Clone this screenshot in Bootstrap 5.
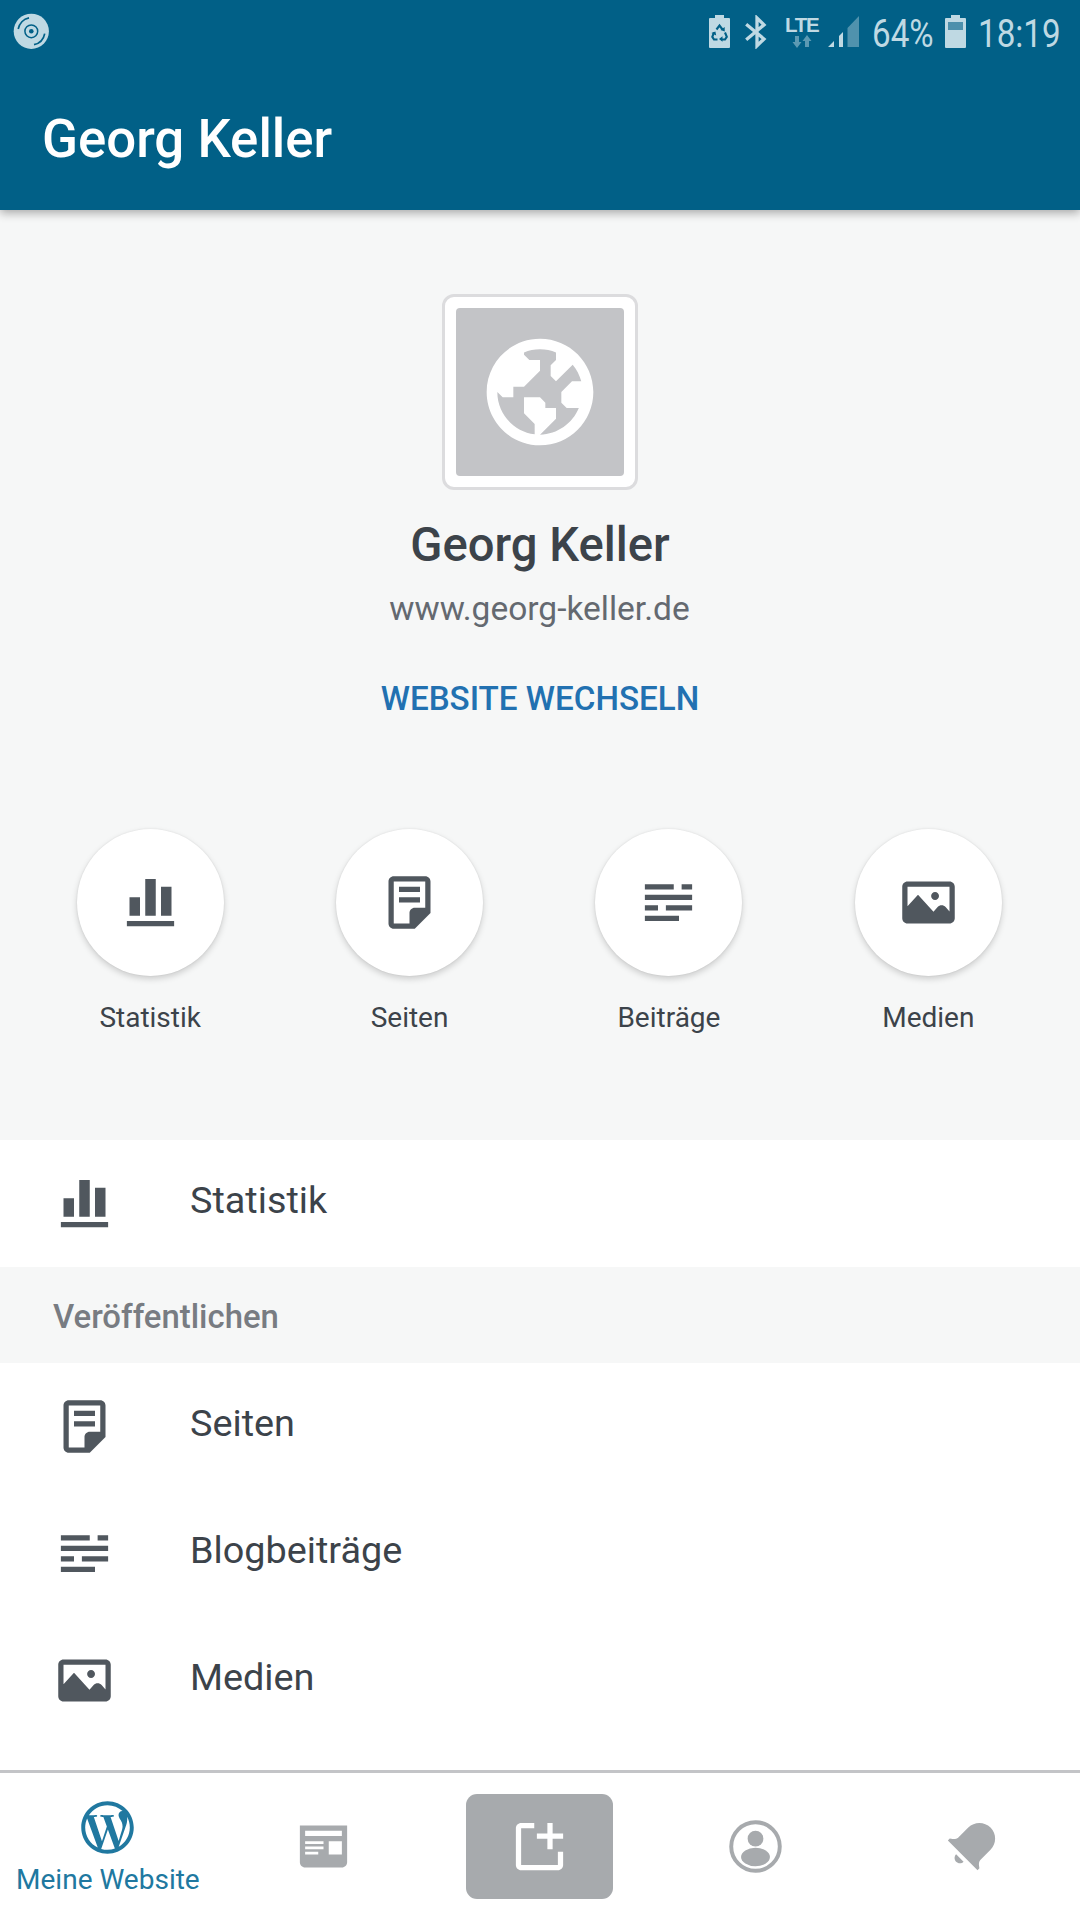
<!DOCTYPE html>
<html lang="de">
<head>
<meta charset="utf-8">
<meta name="viewport" content="width=device-width, initial-scale=1">
<title>Georg Keller</title>
<link href="https://cdn.jsdelivr.net/npm/bootstrap@5.3.0/dist/css/bootstrap.min.css" rel="stylesheet">
<style>
  body { font-family: Roboto, "Noto Sans", sans-serif; color: #3c434a; background: #fff; width: 1080px; height: 1920px; overflow: hidden; }
  svg { display: block; flex: none; fill: currentColor; }
  .ico { width: 63px; height: 63px; color: #50575e; }
  .app-head { height: 210px; background: #016087; box-shadow: 0 3px 9px rgba(0,0,0,.32); z-index: 2; }
  .status { height: 63px; color: #bfd9e3; }
  .disc-ico { margin: 13px 0 0 13px; }
  .status-right { padding-right: 16px; }
  .status-right > svg { margin-top: 15px; }
  .status-txt { font-size: 39.5px; line-height: 46px; margin-top: 11px; white-space: nowrap; transform: scaleX(.84); transform-origin: 0 50%; }
  .bt { margin-left: 14px; }
  .net { margin: 16px 0 0 17px; width: 34px; }
  .net svg { margin: 1px 0 0 7px; }
  .signal { margin-left: 9px; }
  .batt { margin-left: 12px; }
  .pct { width: 61px; margin-left: 12px; }
  .clock { width: 86px; margin-left: 12px; }
  .lte { font-family: "Liberation Sans", sans-serif; font-size: 20.5px; letter-spacing: -1.3px; font-weight: 700; line-height: 18px; }
  .app-title { font-size: 52.8px; line-height: 62px; font-weight: 500; padding: 45px 0 0 42px; }
  .hero { height: 930px; background: #f6f7f7; padding-top: 84px; }
  .site-frame { width: 196px; height: 196px; border: 3px solid #dcdcde; border-radius: 12px; background: #fff; padding: 11px; }
  .site-img { background: #c3c4c7; border-radius: 4px; color: #fff; height: 168px; }
  .site-name { font-size: 47.2px; line-height: 56px; font-weight: 500; margin-top: 27px; }
  .site-url { font-size: 33.5px; line-height: 40px; color: #646970; margin-top: 16px; padding-right: 1px; }
  .site-switch { font-size: 33.2px; line-height: 40px; font-weight: 500; color: #2271b1; margin-top: 50px; text-decoration: none; }
  .quick { padding: 0 22px 0 20.5px; margin-top: 110px; }
  .disc { width: 147px; height: 147px; background: #fff; box-shadow: 0 3px 6px rgba(0,0,0,.17), 0 0 2px rgba(0,0,0,.09); }
  .quick-label { font-size: 28px; line-height: 34px; margin-top: 25px; }
  .menu-row { height: 127px; padding-left: 53px; border: 0; border-radius: 0; }
  .menu-row span { font-size: 37.8px; line-height: 46px; margin-left: 74px; padding-bottom: 7px; color: #3c434a; }
  .menu-sec { height: 96px; background: #f6f7f7; color: #787c82; font-size: 32.9px; font-weight: 500; padding: 4px 0 0 53px; }
  .tabs { height: 150px; border-top: 3px solid #c3c4c7; color: #a7aaad; background: #fff; padding-right: 1px; }
  .tabs .ico { color: inherit; }
  .tab-on { color: #2078a0 !important; }
  .tab-on span { font-size: 28px; line-height: 34px; margin-top: 4px; white-space: nowrap; }
  .compose { width: 147px; height: 105px; border-radius: 11px; background: #a7aaad; color: #fff; }
</style>
<script src="https://cdn.jsdelivr.net/npm/bootstrap@5.3.0/dist/js/bootstrap.bundle.min.js"></script>
</head>
<body class="d-flex flex-column">
<svg class="d-none" aria-hidden="true">
  <symbol id="i-stats" viewBox="0 0 24 24"><path d="M21 21H3v-2h18v2zM8 10H4v7h4v-7zm6-7h-4v14h4V3zm6 3h-4v11h4V6z"/></symbol>
  <symbol id="i-pages" viewBox="0 0 24 24"><path d="M16 8H8V6h8v2zm0 2H8v2h8v-2zm4-6v12l-6 6H6c-1.105 0-2-.895-2-2V4c0-1.105.895-2 2-2h12c1.105 0 2 .895 2 2zm-2 10V4H6v16h6v-4c0-1.105.895-2 2-2h4z"/></symbol>
  <symbol id="i-posts" viewBox="0 0 24 24"><path d="M16 19H3v-2h13v2zm5-10H3v2h18V9zM3 5v2h11V5H3zm14 0v2h4V5h-4zm-6 8v2h10v-2H11zm-8 0v2h5v-2H3z"/></symbol>
  <symbol id="i-image" viewBox="0 0 24 24"><path d="M13 9.5c0-.828.672-1.5 1.5-1.5s1.5.672 1.5 1.5-.672 1.5-1.5 1.5-1.5-.672-1.5-1.5zM22 6v12c0 1.105-.895 2-2 2H4c-1.105 0-2-.895-2-2V6c0-1.105.895-2 2-2h16c1.105 0 2 .895 2 2zm-2 0H4v7.444L8 9l5.895 6.55 1.587-1.85c.798-.932 2.24-.932 3.037 0L20 15.426V6z"/></symbol>
</svg>

<header class="app-head position-relative flex-shrink-0">
  <div class="status d-flex align-items-start justify-content-between">
    <svg class="disc-ico" width="36" height="36" viewBox="0 0 36 36">
      <circle cx="18.3" cy="18.3" r="17.6"/>
      <g fill="none" stroke="#016087" stroke-width="1.5"><circle cx="18.3" cy="18.3" r="6.4"/><path d="M5.2 16A14 14 0 0 1 16 4.8M31.7 20.6A14 14 0 0 1 21 31.7" stroke-width="1.7"/></g>
      <circle cx="18.3" cy="18.3" r="2.3" fill="#016087"/>
    </svg>
    <div class="status-right d-flex align-items-start">
      <svg width="21" height="33" viewBox="0 0 21 33">
        <path d="M6 0h9v3h5q1 0 1 1v28q0 1-1 1H1q-1 0-1-1V4q0-1 1-1h5z"/>
        <path d="M7.500 14.500L10.500 10.500l3 4M16 17.500l1.800 4.300L16 24.500h-3.500M8.500 24.500H5l-1.700-2.700L5 17.500" fill="none" stroke="#016087" stroke-width="2.100"/>
        <path d="M15.700 12v4.500l-4.200-1.500zM13.500 21.300v5.500L10 24zM2.400 18l4-1.500.8 4z" fill="#016087"/>
      </svg>
      <svg class="bt" width="24" height="34" viewBox="0 0 24 34"><path d="M2.200 9.300L20 24L13 30.800V3L20 9.800L2.200 24.700" fill="none" stroke="currentColor" stroke-width="3.300"/></svg>
      <div class="net">
        <div class="lte">LTE</div>
        <svg width="20" height="13" viewBox="0 0 20 13" opacity=".48"><path d="M3 1h4v6h2.500L5 13 .5 7H3zM13 12h4V6h2.500L15 0l-4.500 6H13z"/></svg>
      </div>
      <svg class="signal" width="32" height="33" viewBox="0 0 32 33"><path d="M0 32l6-6v6zM11 21l4-4v15h-4z"/><path d="M19.500 13L31 1v31H19.500z" opacity=".42"/></svg>
      <div class="status-txt pct">64%</div>
      <svg class="batt" width="21" height="33" viewBox="0 0 21 33"><path d="M6 0h9v3h5q1 0 1 1v28q0 1-1 1H1q-1 0-1-1V4q0-1 1-1h5z"/><path d="M3 7h15v8H3z" fill="#4d90ac"/></svg>
      <div class="status-txt clock">18:19</div>
    </div>
  </div>
  <h1 class="app-title m-0 text-white">Georg Keller</h1>
</header>

<main class="flex-grow-1 overflow-hidden">
  <section class="hero d-flex flex-column align-items-center text-center">
    <div class="site-frame flex-shrink-0">
      <div class="site-img d-flex align-items-center justify-content-center">
        <svg width="128" height="128" viewBox="0 0 24 24"><path d="M12 2C6.477 2 2 6.477 2 12s4.477 10 10 10 10-4.477 10-10S17.523 2 12 2zm0 18l3-3v-2h-2v-1l-1-1H9v3l2 2v1.930c-3.940-.494-7-3.858-7-7.930l1 1h2v-2h2l3-3V6h-2L9 5v-.410C9.927 4.210 10.940 4 12 4s2.073.212 3 .590V6l-1 1v2l1 1 3.130-3.130c.752.897 1.304 1.964 1.606 3.130H18l-2 2v2l1 1h2.285C18.080 17.880 15.300 19.920 12 20z"/></svg>
      </div>
    </div>
    <h2 class="site-name mb-0">Georg Keller</h2>
    <div class="site-url">www.georg-keller.de</div>
    <a class="site-switch" href="#">WEBSITE WECHSELN</a>
    <div class="quick d-flex w-100">
      <div class="col-3 d-flex flex-column align-items-center"><div class="disc rounded-circle d-flex align-items-center justify-content-center"><svg class="ico"><use href="#i-stats"/></svg></div><div class="quick-label">Statistik</div></div>
      <div class="col-3 d-flex flex-column align-items-center"><div class="disc rounded-circle d-flex align-items-center justify-content-center"><svg class="ico"><use href="#i-pages"/></svg></div><div class="quick-label">Seiten</div></div>
      <div class="col-3 d-flex flex-column align-items-center"><div class="disc rounded-circle d-flex align-items-center justify-content-center"><svg class="ico"><use href="#i-posts"/></svg></div><div class="quick-label">Beiträge</div></div>
      <div class="col-3 d-flex flex-column align-items-center"><div class="disc rounded-circle d-flex align-items-center justify-content-center"><svg class="ico"><use href="#i-image"/></svg></div><div class="quick-label">Medien</div></div>
    </div>
  </section>
  <div class="list-group list-group-flush">
    <div class="list-group-item menu-row d-flex align-items-center py-0"><svg class="ico"><use href="#i-stats"/></svg><span>Statistik</span></div>
    <div class="menu-sec d-flex align-items-center">Veröffentlichen</div>
    <div class="list-group-item menu-row d-flex align-items-center py-0"><svg class="ico"><use href="#i-pages"/></svg><span>Seiten</span></div>
    <div class="list-group-item menu-row d-flex align-items-center py-0"><svg class="ico"><use href="#i-posts"/></svg><span>Blogbeiträge</span></div>
    <div class="list-group-item menu-row d-flex align-items-center py-0"><svg class="ico"><use href="#i-image"/></svg><span>Medien</span></div>
  </div>
</main>

<nav class="tabs nav nav-fill flex-nowrap flex-shrink-0 align-items-center">
  <div class="tab-on col d-flex flex-column align-items-center">
    <svg class="ico" viewBox="0 0 24 24"><path d="M12 2C6.477 2 2 6.477 2 12s4.477 10 10 10 10-4.477 10-10S17.523 2 12 2zM3.500 12c0-1.232.264-2.402.736-3.460L8.290 19.650C5.456 18.272 3.500 15.365 3.500 12zm8.500 8.500c-.834 0-1.640-.120-2.400-.345l2.550-7.410 2.613 7.157c.017.042.038.080.060.117-.884.310-1.833.480-2.823.480zm1.172-12.485c.512-.027.973-.080.973-.080.458-.055.404-.728-.054-.702 0 0-1.376.108-2.265.108-.835 0-2.240-.107-2.240-.107-.458-.026-.510.674-.053.700 0 0 .434.055.892.082l1.324 3.630-1.860 5.578-3.096-9.208c.512-.027.973-.080.973-.080.458-.055.403-.728-.055-.702 0 0-1.376.108-2.265.108-.160 0-.347-.003-.547-.010C6.418 5.025 9.030 3.500 12 3.500c2.213 0 4.228.846 5.740 2.232-.037-.002-.072-.007-.110-.007-.835 0-1.427.727-1.427 1.510 0 .700.404 1.292.835 1.993.323.566.700 1.293.700 2.344 0 .727-.280 1.572-.646 2.748l-.848 2.833-3.072-9.138zm3.100 11.332l2.597-7.506c.484-1.212.645-2.180.645-3.044 0-.313-.020-.603-.057-.874.664 1.210 1.042 2.600 1.042 4.078 0 3.136-1.700 5.874-4.227 7.347z"/></svg>
    <span>Meine Website</span>
  </div>
  <div class="col d-flex justify-content-center"><svg class="ico" viewBox="0 0 24 24"><path d="M3 4v14c0 1.100.900 2 2 2h14c1.100 0 2-.900 2-2V4H3zm7 11H5v-1h5v1zm2-2H5v-1h7v1zm0-2H5v-1h7v1zm7 4h-5v-5h5v5zm0-7H5V6h14v2z"/></svg></div>
  <div class="col d-flex justify-content-center"><div class="compose d-flex align-items-center justify-content-center"><svg class="ico" viewBox="0 0 24 24"><path d="M21 14v5c0 1.105-.895 2-2 2H5c-1.105 0-2-.895-2-2V5c0-1.105.895-2 2-2h5v2H5v14h14v-5h2zM21 7h-4V3h-2v4h-4v2h4v4h2V9h4z"/></svg></div></div>
  <div class="col d-flex justify-content-center"><svg class="ico" viewBox="0 0 24 24"><circle cx="12" cy="12" r="9.250" fill="none" stroke="currentColor" stroke-width="1.500"/><circle cx="12" cy="9" r="3"/><ellipse cx="12" cy="16" rx="5.500" ry="3.500"/></svg></div>
  <div class="col d-flex justify-content-center"><svg class="ico" viewBox="0 0 24 24"><path d="M6.140 14.970l2.828 2.827c-.362.362-.862.586-1.414.586-1.105 0-2-.895-2-2 0-.552.224-1.052.586-1.414zm8.867 5.324L14.300 21 3 9.700l.706-.707 1.102.157c.754.108 1.690-.122 2.077-.510l3.885-3.884c2.340-2.340 6.135-2.340 8.475 0s2.340 6.135 0 8.475l-3.885 3.886c-.388.388-.618 1.323-.510 2.077l.157 1.100z"/></svg></div>
</nav>
</body>
</html>
